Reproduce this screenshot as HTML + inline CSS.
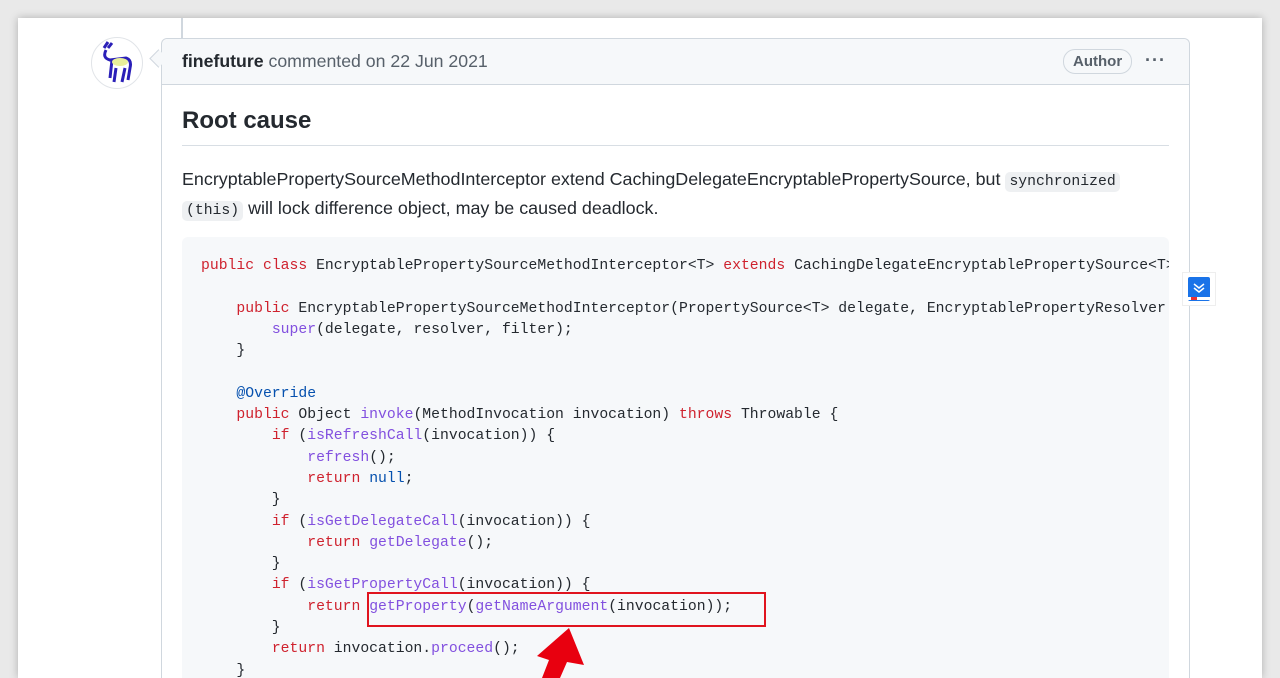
<!DOCTYPE html>
<html><head><meta charset="utf-8"><style>
html,body{margin:0;width:1280px;height:678px;overflow:hidden;}
body{background:#e9e9e9;position:relative;font-family:"Liberation Sans",sans-serif;}
.page{position:absolute;left:18px;top:18px;width:1244px;height:660px;background:#fff;box-shadow:0 0 8px rgba(0,0,0,.25);}
.tl{position:absolute;left:181px;top:18px;width:2px;height:20px;background:#d0d7de;}
.av{position:absolute;left:91px;top:37px;width:50px;height:50px;border-radius:50%;border:1px solid #e1e4e8;background:#fff;overflow:hidden;}
.box{position:absolute;left:161px;top:38px;width:1027px;height:639px;border:1px solid #d0d7de;border-bottom:none;border-radius:6px 6px 0 0;background:#fff;}
.hdr{height:45px;background:#f6f8fa;border-bottom:1px solid #d0d7de;border-radius:6px 6px 0 0;position:relative;}
.hdr .t{position:absolute;left:20px;top:12px;font-size:17.7px;color:#57606a;}
.hdr b{color:#24292f;}
.auth{position:absolute;left:901px;top:10px;border:1px solid #d0d7de;border-radius:12px;padding:3px 9px;font-size:15px;color:#57606a;font-weight:bold;}
.dots{position:absolute;left:983px;top:11px;font-size:18px;color:#57606a;letter-spacing:1px;font-weight:bold;}
.arrowl{position:absolute;left:152px;top:52px;width:12px;height:12px;background:#f6f8fa;border-left:1px solid #d0d7de;border-bottom:1px solid #d0d7de;transform:rotate(45deg);}
h2{position:absolute;left:182px;top:107px;margin:0;font-size:24px;font-weight:600;color:#24292f;}
.hr{position:absolute;left:182px;top:145px;width:987px;height:1px;background:#d8dee4;}
p{position:absolute;left:182px;top:166px;margin:0;font-size:17.9px;line-height:26px;color:#24292f;width:990px;}
code.i{font-family:"Liberation Mono",monospace;font-size:14.75px;background:#eef0f2;border-radius:5px;padding:2px 4px;}
.code{position:absolute;left:182px;top:237px;width:987px;height:441px;background:#f6f8fa;border-radius:6px 6px 0 0;overflow:hidden;}
pre{margin:0;position:absolute;left:19px;top:19px;font-family:"Liberation Mono",monospace;font-size:14.75px;line-height:21.3px;color:#24292f;}
.k{color:#cf222e}.f{color:#8250df}.a{color:#0550ae}
.red{position:absolute;left:367px;top:592px;width:395px;height:31px;border:2px solid #e0141e;}
.side{position:absolute;left:1182px;top:272px;width:32px;height:32px;background:#fff;border:1px solid #eee;}
</style></head><body>
<div class="page"></div>
<div class="tl"></div>
<div class="av"><svg width="50" height="50" viewBox="0 0 50 50"><path d="M12 10 L16 4 M16 10 L20 5 M14 12 Q10 20 18 22 L34 20 Q40 22 38 30 L36 42 M20 22 L18 40 M24 30 L22 44 M33 30 L30 44" stroke="#2a1fb8" stroke-width="3" fill="none"/><ellipse cx="28" cy="24" rx="8" ry="4" fill="#e9ef9a"/></svg></div>
<div class="box"><div class="hdr"><span class="t"><b>finefuture</b> commented on 22 Jun 2021</span><span class="auth">Author</span><span class="dots">···</span></div></div>
<div class="arrowl"></div>
<h2>Root cause</h2>
<div class="hr"></div>
<p>EncryptablePropertySourceMethodInterceptor extend CachingDelegateEncryptablePropertySource, but <code class="i">synchronized</code><br><code class="i">(this)</code> will lock difference object, may be caused deadlock.</p>
<div class="code"><pre><span class="k">public class</span> EncryptablePropertySourceMethodInterceptor&lt;T&gt; <span class="k">extends</span> CachingDelegateEncryptablePropertySource&lt;T&gt;

    <span class="k">public</span> EncryptablePropertySourceMethodInterceptor(PropertySource&lt;T&gt; delegate, EncryptablePropertyResolver
        <span class="f">super</span>(delegate, resolver, filter);
    }

    <span class="a">@Override</span>
    <span class="k">public</span> Object <span class="f">invoke</span>(MethodInvocation invocation) <span class="k">throws</span> Throwable {
        <span class="k">if</span> (<span class="f">isRefreshCall</span>(invocation)) {
            <span class="f">refresh</span>();
            <span class="k">return</span> <span class="a">null</span>;
        }
        <span class="k">if</span> (<span class="f">isGetDelegateCall</span>(invocation)) {
            <span class="k">return</span> <span class="f">getDelegate</span>();
        }
        <span class="k">if</span> (<span class="f">isGetPropertyCall</span>(invocation)) {
            <span class="k">return</span> <span class="f">getProperty</span>(<span class="f">getNameArgument</span>(invocation));
        }
        <span class="k">return</span> invocation.<span class="f">proceed</span>();
    }</pre></div>
<div class="red"></div>
<svg style="position:absolute;left:0;top:0" width="1280" height="678"><polygon points="569,628 584,665 567,662 560,678 542,678 549,660 537,656" fill="#e8000f"/></svg>
<div class="side"><svg width="32" height="32"><rect x="5" y="4" width="22" height="24" rx="2" fill="#1a73e8"/><path d="M11 11 L16 15 L21 11 M11 15 L16 19 L21 15" stroke="#fff" stroke-width="1.5" fill="none"/><rect x="5" y="24" width="22" height="3" fill="#fff"/><rect x="8" y="24" width="6" height="3" fill="#e33"/></svg></div>
</body></html>
